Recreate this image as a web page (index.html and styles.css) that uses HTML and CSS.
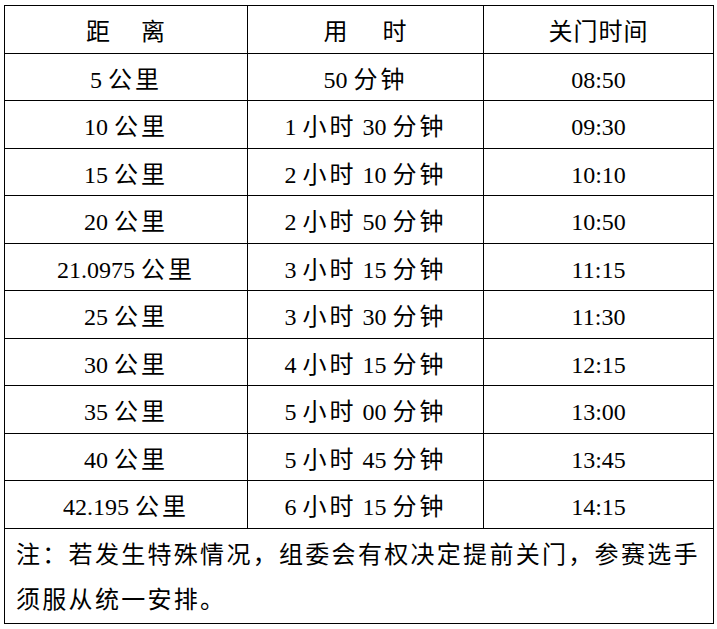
FILE: index.html
```html
<!DOCTYPE html>
<html lang="zh-CN">
<head>
<meta charset="utf-8">
<title>关门时间</title>
<link rel="stylesheet" href="styles.css">
</head>
<body>
<table class="cutoff">
  <colgroup>
    <col class="c1"><col class="c2"><col class="c3">
  </colgroup>
  <tr class="head"><td><span class="sp">距</span>离</td><td><span class="sp2">用</span>时</td><td>关门时间</td></tr>
  <tr><td>5 <span class="cj">公里</span></td><td>50 <span class="cj">分钟</span></td><td>08:50</td></tr>
  <tr><td>10 <span class="cj">公里</span></td><td>1 <span class="cj">小时</span> 30 <span class="cj">分钟</span></td><td>09:30</td></tr>
  <tr><td>15 <span class="cj">公里</span></td><td>2 <span class="cj">小时</span> 10 <span class="cj">分钟</span></td><td>10:10</td></tr>
  <tr><td>20 <span class="cj">公里</span></td><td>2 <span class="cj">小时</span> 50 <span class="cj">分钟</span></td><td>10:50</td></tr>
  <tr><td>21.0975 <span class="cj">公里</span></td><td>3 <span class="cj">小时</span> 15 <span class="cj">分钟</span></td><td>11:15</td></tr>
  <tr><td>25 <span class="cj">公里</span></td><td>3 <span class="cj">小时</span> 30 <span class="cj">分钟</span></td><td>11:30</td></tr>
  <tr><td>30 <span class="cj">公里</span></td><td>4 <span class="cj">小时</span> 15 <span class="cj">分钟</span></td><td>12:15</td></tr>
  <tr><td>35 <span class="cj">公里</span></td><td>5 <span class="cj">小时</span> 00 <span class="cj">分钟</span></td><td>13:00</td></tr>
  <tr><td>40 <span class="cj">公里</span></td><td>5 <span class="cj">小时</span> 45 <span class="cj">分钟</span></td><td>13:45</td></tr>
  <tr><td>42.195 <span class="cj">公里</span></td><td>6 <span class="cj">小时</span> 15 <span class="cj">分钟</span></td><td>14:15</td></tr>
  <tr class="note"><td colspan="3">注：若发生特殊情况，组委会有权决定提前关门，参赛选手须服从统一安排。</td></tr>
</table>
</body>
</html>
```
FILE: styles.css
```css
html, body {
  margin: 0;
  padding: 0;
  background: #fff;
}
body {
  padding: 5px 0 0 4px;
}
.cutoff {
  border-collapse: collapse;
  width: 709px;
  table-layout: fixed;
  font-family: "Liberation Serif", "Noto Sans CJK SC", serif;
  font-size: 24px;
  color: #000;
}
.c1 { width: 243px; }
.c2 { width: 236px; }
.c3 { width: 230px; }
.cutoff td {
  border: 1.5px solid #000;
  height: 47.5px;
  padding: 6px 0 0 0;
  text-align: center;
  vertical-align: middle;
  line-height: 30px;
  box-sizing: border-box;
}
.cj {
  letter-spacing: 3px;
}
.head td {
  letter-spacing: 1px;
}
.sp { margin-right: 30px; }
.sp2 { margin-right: 34px; }
.note td {
  text-align: left;
  padding: 4px 6px 0 11px;
  line-height: 45px;
  height: 94px;
  letter-spacing: 2.3px;
  vertical-align: top;
}
```
